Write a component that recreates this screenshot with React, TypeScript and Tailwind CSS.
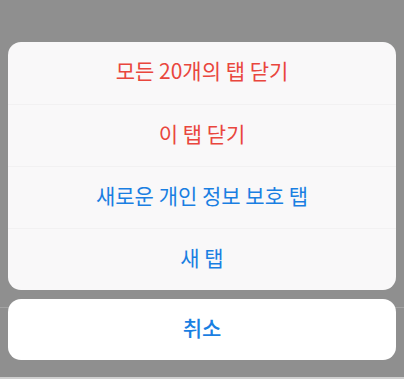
import React from "react";

const font = { fontFamily: '"Noto Sans CJK KR", "Noto Sans", sans-serif' };

const actions = [
  { label: "모든 20개의 탭 닫기", tone: "text-[#e9463d]" },
  { label: "이 탭 닫기", tone: "text-[#e9463d]" },
  { label: "새로운 개인 정보 보호 탭", tone: "text-[#1a7fe2]" },
  { label: "새 탭", tone: "text-[#1a7fe2]" },
];

export default function App() {
  return (
    <div className="relative w-full h-[379px] overflow-hidden bg-[#8f8f8f]" style={font}>
      {/* underlying toolbar edge and bottom strip */}
      <div className="absolute left-0 right-0 top-[307px] h-px bg-[#a3a3a3]" />
      <div className="absolute left-0 right-0 bottom-0 h-[2px] bg-[#cfcfcf]" />

      <div className="relative flex flex-col gap-[9px] px-2 pt-[42px]">
        <div className="flex flex-col rounded-[13px] bg-[#f9f8f9] overflow-hidden">
          {actions.map((a, i) => (
            <button
              key={a.label}
              className={`h-[62px] pb-1 flex items-center justify-center text-[21px] ${a.tone} ${i > 0 ? "border-t border-[#f2f1f2]" : ""}`}
            >
              {a.label}
            </button>
          ))}
        </div>
        <button className="h-[61px] pb-1 rounded-[13px] bg-white flex items-center justify-center text-[21px] font-medium text-[#1a7fe2]">
          취소
        </button>
      </div>
    </div>
  );
}
